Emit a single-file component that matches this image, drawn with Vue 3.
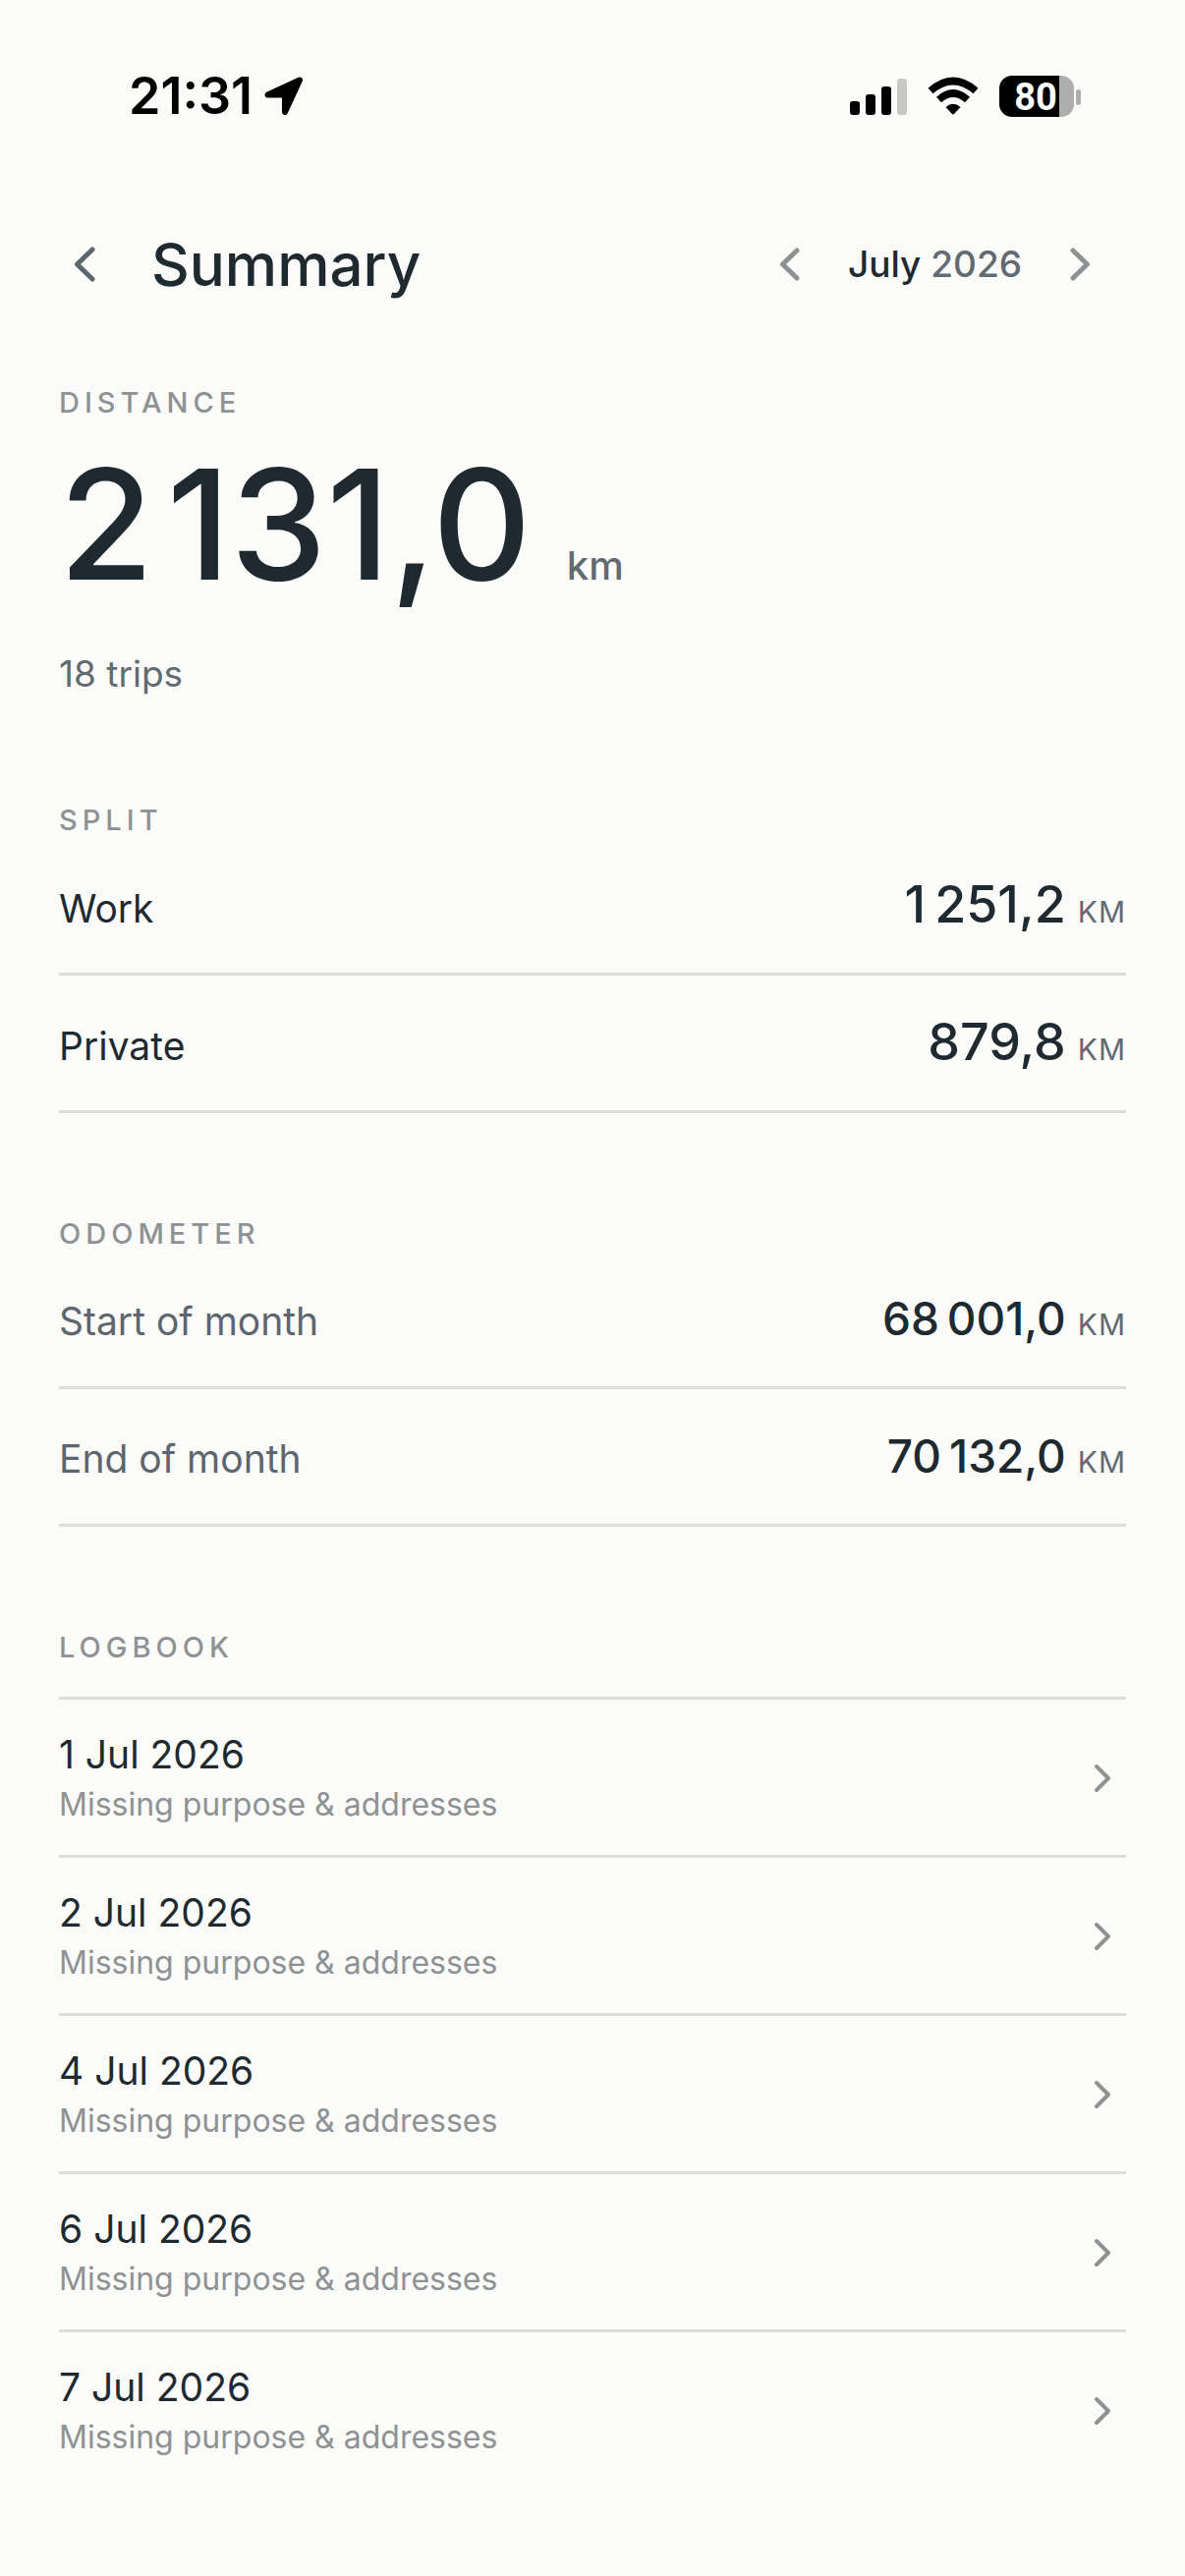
<template>
  <div class="screen">
    <div class="status-bar">
      <div class="status-left">
        <span class="clock">21:31</span>
        <svg class="location" width="40" height="40" viewBox="0 0 40 40" aria-hidden="true">
          <path
            d="M3.5 18.5 L36 3.5 L21 36 V20 Q21 18.5 19.5 18.5 Z"
            fill="#000"
            stroke="#000"
            stroke-width="6"
            stroke-linejoin="round"
          />
        </svg>
      </div>
      <div class="status-right">
        <svg width="58" height="42" viewBox="0 0 58 42" aria-hidden="true">
          <rect x="0" y="26" width="10" height="14" rx="3" />
          <rect x="16" y="19" width="10" height="21" rx="3" />
          <rect x="32" y="11" width="10" height="29" rx="3" />
          <rect x="48" y="3" width="10" height="37" rx="3" fill="#c8c8c7" />
        </svg>
        <svg width="52" height="42" viewBox="0 0 52 42" aria-hidden="true">
          <path d="M3 15.5 Q26 -4.5 49 15.5" fill="none" stroke="#000" stroke-width="7.5" />
          <path d="M11.5 24.5 Q26 11.5 40.5 24.5" fill="none" stroke="#000" stroke-width="7.5" />
          <path d="M18.5 32 Q26 25.5 33.5 32 L27.3 38.8 Q26 40.3 24.7 38.8 Z" />
        </svg>
        <svg class="battery" width="84" height="42" viewBox="0 0 84 42" role="img" aria-label="Battery">
          <path d="M62 0 H63 A13 13 0 0 1 76 13 V29 A13 13 0 0 1 63 42 H61 V0 Z" fill="#adadad" />
          <path d="M13 0 H61 V42 H13 A13 13 0 0 1 0 29 V13 A13 13 0 0 1 13 0 Z" />
          <rect x="78" y="14" width="5" height="16" rx="2.5" fill="#adadad" />
          <text class="battery-level" x="37" y="35" text-anchor="middle">80</text>
        </svg>
      </div>
    </div>

    <header class="header">
      <button class="back" type="button" aria-label="Back">
        <svg width="24" height="38" viewBox="0 0 24 38">
          <path d="M20 4 L4.5 19 L20 34" />
        </svg>
      </button>
      <h1 class="title">Summary</h1>
      <div class="month-nav">
        <button type="button" aria-label="Previous month" @click="shiftMonth(-1)">
          <svg width="24" height="34" viewBox="0 0 24 34">
            <path d="M19 3 L4.5 17 L19 31" />
          </svg>
        </button>
        <span class="month">{{ monthName }} <span class="year">{{ year }}</span></span>
        <button type="button" aria-label="Next month" @click="shiftMonth(1)">
          <svg width="24" height="34" viewBox="0 0 24 34">
            <path d="M5 3 L19.5 17 L5 31" />
          </svg>
        </button>
      </div>
    </header>

    <main class="content">
      <section>
        <h2 class="section-label">DISTANCE</h2>
        <p class="total">{{ formatKm(2131, '\u200a') }}<span class="total-unit">km</span></p>
        <p class="trips">18 trips</p>
      </section>

      <section>
        <h2 class="section-label">SPLIT</h2>
        <dl class="rows">
          <div v-for="item in split" :key="item.label" class="row">
            <dt>{{ item.label }}</dt>
            <dd class="large">{{ formatKm(item.km) }}<span class="unit">KM</span></dd>
          </div>
        </dl>
      </section>

      <section>
        <h2 class="section-label">ODOMETER</h2>
        <dl class="rows muted">
          <div v-for="item in odometer" :key="item.label" class="row">
            <dt>{{ item.label }}</dt>
            <dd>{{ formatKm(item.km) }}<span class="unit">KM</span></dd>
          </div>
        </dl>
      </section>

      <section>
        <h2 class="section-label">LOGBOOK</h2>
        <ul class="logbook">
          <li v-for="day in logbook" :key="day">
            <button class="log-entry" type="button">
              <span class="log-text">
                <span class="log-date">{{ day }} Jul 2026</span>
                <span class="log-note">Missing purpose &amp; addresses</span>
              </span>
              <svg width="22" height="34" viewBox="0 0 22 34" aria-hidden="true">
                <path d="M5 5 L17 17 L5 29" />
              </svg>
            </button>
          </li>
        </ul>
      </section>
    </main>
  </div>
</template>

<script setup>
import { ref, computed } from 'vue';

const months = [
  'January', 'February', 'March', 'April', 'May', 'June',
  'July', 'August', 'September', 'October', 'November', 'December'
];

const current = ref(2026 * 12 + 6);
const monthName = computed(() => months[current.value % 12]);
const year = computed(() => Math.floor(current.value / 12));

const shiftMonth = (step) => {
  current.value += step;
};

const split = [
  { label: 'Work', km: 1251.2 },
  { label: 'Private', km: 879.8 }
];

const odometer = [
  { label: 'Start of month', km: 68001 },
  { label: 'End of month', km: 70132 }
];

const logbook = [1, 2, 4, 6, 7];

// Thin space between thousands, comma as decimal separator
const formatKm = (km, separator = '\u2009') => {
  const [whole, decimal] = km.toFixed(1).split('.');
  return whole.replace(/\B(?=(\d{3})+$)/g, separator) + ',' + decimal;
};
</script>

<style>
body {
  margin: 0;
  background: #fbfcf9;
}
</style>

<style scoped>
.screen {
  box-sizing: border-box;
  min-height: 100vh;
  background: #fbfcf9;
  color: #1f2a30;
  font-family: Inter, 'Liberation Sans', sans-serif;
  font-size: 39px;
}

h1,
h2,
p,
dl,
dd,
ul {
  margin: 0;
  padding: 0;
}

button {
  border: 0;
  padding: 0;
  background: none;
  color: inherit;
  font: inherit;
  cursor: pointer;
}

.status-bar {
  display: flex;
  justify-content: space-between;
  align-items: center;
  padding: 68px 105px 0 131px;
  color: #000;
}

.status-left {
  display: flex;
  align-items: center;
  gap: 12px;
}

.clock {
  font-size: 52px;
  font-weight: 600;
  line-height: 60px;
}

.status-right {
  display: flex;
  align-items: center;
  gap: 21px;
}

.battery {
  overflow: visible;
}

.battery-level {
  fill: #fff;
  font-family: Roboto, sans-serif;
  font-size: 38px;
  font-weight: 700;
}

.header {
  display: flex;
  align-items: center;
  padding: 101px 60px 0;
}

.header svg,
.log-entry svg {
  fill: none;
  stroke: #8f9294;
  stroke-width: 4;
  stroke-linecap: round;
  stroke-linejoin: round;
}

.header svg {
  stroke-width: 5;
}

.back {
  display: flex;
  justify-content: center;
  width: 52px;
  margin-right: 42px;
}

.header .back svg {
  stroke: #5d656d;
}

.title {
  font-size: 60px;
  font-weight: 500;
  line-height: 80px;
}

.month-nav {
  display: flex;
  align-items: center;
  gap: 12px;
  margin-left: auto;
}

.month-nav button {
  display: flex;
  justify-content: center;
  width: 94px;
}

.month {
  font-size: 37px;
  font-weight: 500;
  line-height: 48px;
}

.year {
  color: #626a72;
}

.content {
  display: flex;
  flex-direction: column;
  gap: 105px;
  padding: 83px 60px 60px;
}

.section-label {
  color: #8f9294;
  font-size: 29px;
  font-weight: 500;
  line-height: 36px;
  letter-spacing: 5px;
}

.total {
  margin-top: 22px;
  font-size: 156px;
  font-weight: 500;
  line-height: 168px;
}

.total-unit {
  margin-left: 36px;
  color: #626a72;
  font-size: 40px;
  line-height: 1;
}

.trips {
  margin-top: 42px;
  color: #626a72;
  font-size: 37px;
  line-height: 52px;
}

.row {
  display: flex;
  justify-content: space-between;
  align-items: baseline;
  padding: 36px 0 37px;
  border-bottom: 3px solid #dddedb;
  line-height: 48px;
}

.muted dt {
  color: #5d656d;
}

.row dd {
  font-size: 46px;
  font-weight: 500;
  line-height: 64px;
}

.row dd.large {
  font-size: 52px;
}

.row .unit {
  margin-left: 12px;
  color: #626a72;
  font-size: 30px;
  font-weight: 400;
  line-height: 1;
  letter-spacing: 1px;
}

.logbook {
  margin-top: 32px;
  list-style: none;
}

.log-entry {
  display: flex;
  justify-content: space-between;
  align-items: center;
  width: 100%;
  padding: 29px 13px 28px 0;
  border-top: 3px solid #dddedb;
  text-align: left;
}

.log-text {
  display: flex;
  flex-direction: column;
}

.log-date {
  line-height: 54px;
}

.log-note {
  color: #8f9294;
  font-size: 32px;
  line-height: 47px;
}
</style>
